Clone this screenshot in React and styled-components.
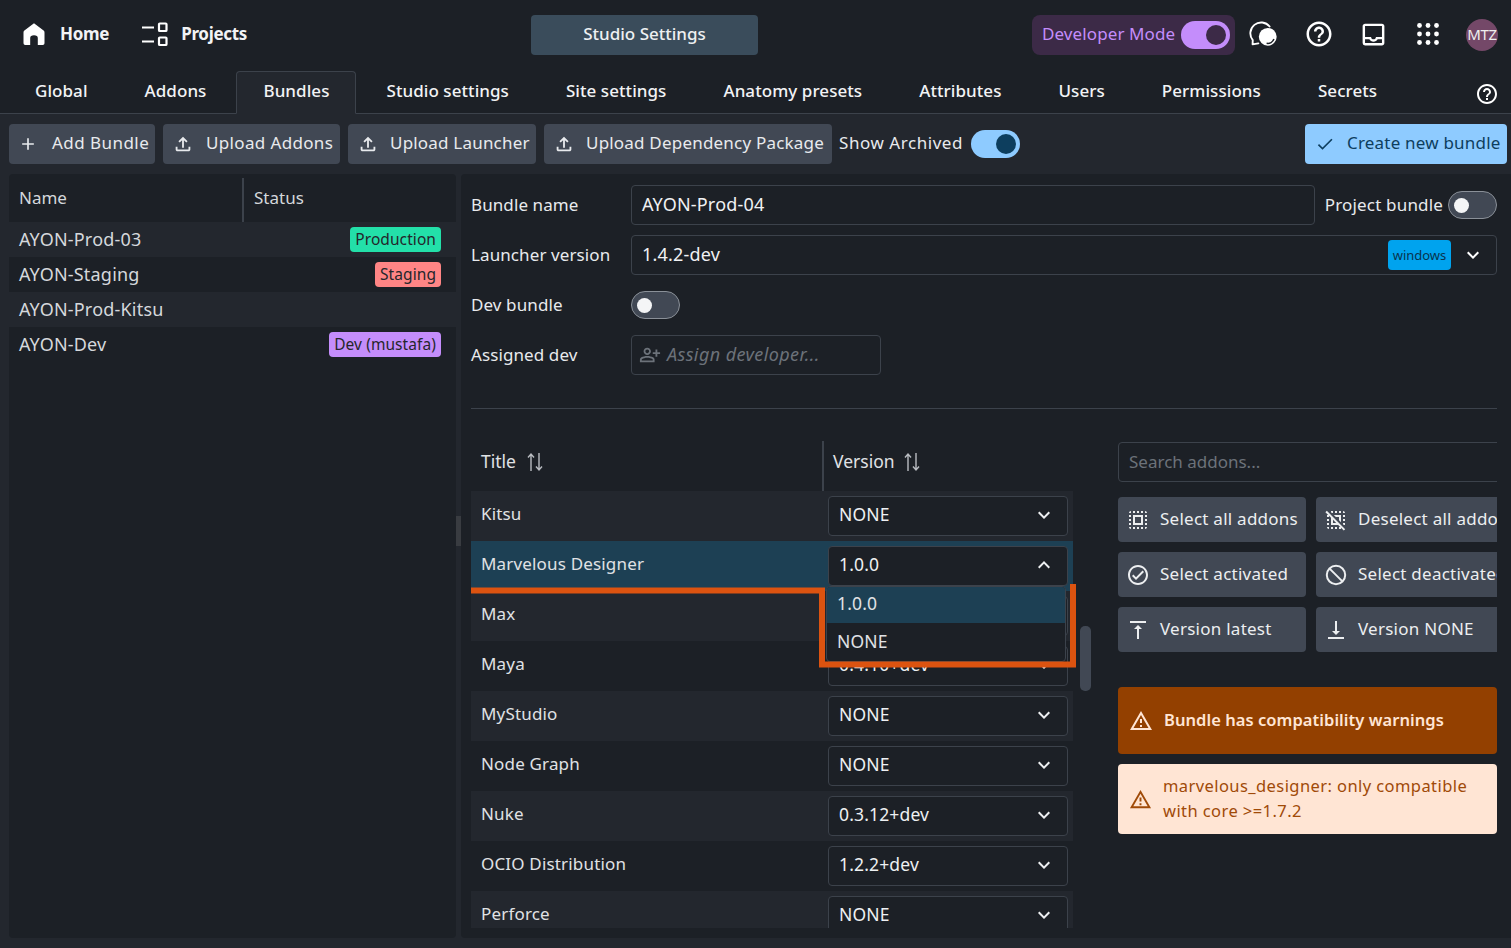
import React from "react";
import styled, { createGlobalStyle } from "styled-components";
import {
  MdAdd, MdOutlineFileUpload, MdCheck, MdOutlineHelpOutline, MdOutlineInbox,
  MdKeyboardArrowDown, MdKeyboardArrowUp, MdOutlinePersonAddAlt, MdOutlineSelectAll, MdOutlineDeselect,
  MdOutlineCheckCircle, MdVerticalAlignTop, MdVerticalAlignBottom, MdOutlineWarningAmber,
} from "react-icons/md";

const Global = createGlobalStyle`
  html, body { margin: 0; padding: 0; background: #23272e; }
  * { box-sizing: border-box; }
  body { font-family: "Noto Sans", "Open Sans", sans-serif; font-size: 17px; color: #e8eaed; }
`;

const T = styled.span`
  margin-bottom: ${p => (p.$mb === undefined ? 4 : p.$mb)}px;
`;
const Page = styled.div`
  width: 1511px; height: 948px; overflow: hidden; display: flex; flex-direction: column;
  background: #23272e;
`;
const TopBar = styled.header`
  height: 67px; flex: none; background: #1c2026; display: flex; align-items: center;
  padding: 0 13px 0 21px; position: relative;
`;
const NavLink = styled.div`
  display: flex; align-items: center; gap: ${p => p.$gap}px; font-weight: 700; font-size: 17px;
  color: #f2f3f5; margin-right: 32px; letter-spacing: -.3px;
`;
const CenterButton = styled.div`
  position: absolute; left: 531px; top: 15px; width: 227px; height: 40px; border-radius: 4px;
  background: #3a4c5b; display: flex; align-items: center; justify-content: center; padding-bottom: 3px;
  font-weight: 500; font-size: 17px; letter-spacing: 0; color: #eef0f2;
`;
const TopRight = styled.div`
  margin-left: auto; display: flex; align-items: center; margin-top: 3px;
`;
const DevMode = styled.div`
  width: 203px; height: 40px; border-radius: 8px; background: #3c2a47; display: flex; align-items: center;
  justify-content: space-between; padding: 0 5px 0 10px; color: #c48dfb; font-size: 17px; letter-spacing: .1px;
  margin-right: 14px;
`;
const Toggle = styled.div`
  width: 49px; height: 28px; border-radius: 14px; flex: none; display: flex; align-items: center;
  justify-content: ${p => (p.$on ? "flex-end" : "flex-start")};
  padding: 0 ${p => (p.$on ? 4 : 5)}px;
  background: ${p => p.$bg}; border: ${p => (p.$on ? "none" : "1px solid #8a9098")};
`;
const Knob = styled.div`
  width: ${p => p.$s}px; height: ${p => p.$s}px; border-radius: 50%; background: ${p => p.$c};
`;
const TopIcon = styled.div`
  width: 30px; height: 30px; display: flex; align-items: center; justify-content: center; color: #fff;
  margin-left: ${p => p.$ml || 0}px; margin-top: -2px;
`;
const Avatar = styled.div`
  width: 32px; height: 32px; border-radius: 50%; background: #744868; color: #eee; font-size: 15px;
  display: flex; align-items: center; justify-content: center; margin-left: 23px; letter-spacing: -.3px;
  white-space: nowrap; overflow: visible; margin-top: -1px;
`;
const TabBar = styled.nav`
  height: 47px; flex: none; background: #1c2026; border-bottom: 1px solid #3c424b; display: flex;
  align-items: flex-end; padding: 0 14px 0 8px; position: relative;
`;
const Tab = styled.div`
  height: 43px; margin-bottom: -1px; padding: 0 26px 5px; display: flex; align-items: center; font-size: 17px;
  letter-spacing: .06px; font-weight: 500; color: #f2f3f5; border-radius: 4px 4px 0 0;
  border: 1px solid ${p => (p.$active ? "#3c424b" : "transparent")};
  border-bottom: 1px solid ${p => (p.$active ? "#23272e" : "transparent")};
  background: ${p => (p.$active ? "#23272e" : "transparent")};
  margin-right: 3px;
`;
const TabHelp = styled.div`
  margin-left: auto; display: flex; color: #fff; margin-bottom: 7px; margin-right: -2px;
`;
const Toolbar = styled.div`
  display: flex; align-items: center; gap: 8px; padding: 10px 4px 10px 9px; flex: none;
`;
const ToolButton = styled.div`
  height: 40px; width: ${p => p.$w}px; flex: none; border-radius: 4px; background: #414854; display: flex; align-items: center;
  padding-left: ${p => p.$pl || 9}px; gap: ${p => p.$gap || 11}px; font-size: 17px; letter-spacing: ${p => p.$ls || 0.2}px; color: #e8eaed; white-space: nowrap;
`;
const ToolLabel = styled.span`
  color: #e8eaed; font-size: 17px; letter-spacing: .55px; margin-left: -1px; margin-bottom: 4px;
`;
const CreateButton = styled(ToolButton)`
  margin-left: auto; background: #8ecbff; color: #0d3e5e; padding-left: 10px; gap: 12px;
`;
const Panels = styled.div`
  flex: 1; min-height: 0; display: flex; padding: 0 0 10px 9px;
`;
const ListPanel = styled.section`
  width: 447px; flex: none; background: #1c2026; border-radius: 4px; overflow: hidden;
`;
const ListHead = styled.div`
  height: 48px; display: grid; grid-template-columns: 233px 1fr; padding-top: 4px;
`;
const ListHeadCell = styled.div`
  padding-left: ${p => p.$pl}px; padding-bottom: 6px; display: flex; align-items: center; color: #d5d8dc;
  border-left: ${p => (p.$sep ? "2px solid #3c424b" : "none")};
`;
const ListRow = styled.div`
  height: 35px; display: flex; align-items: center; justify-content: space-between; padding: 0 15px 0 10px;
  background: ${p => (p.$odd ? "#23272e" : "#1c2026")}; color: #d5d8dc; letter-spacing: .2px; font-size: 18px;
`;
const Badge = styled.div`
  height: 25px; padding: 0 5px; border-radius: 4px; display: flex; align-items: center; background: ${p => p.$bg};
  color: #24262b; font-size: 15.5px; letter-spacing: .08px;
`;
const Splitter = styled.div`
  width: 5px; flex: none; display: flex; align-items: center;
`;
const SplitGrip = styled.div`
  width: 5px; height: 30px; background: #393c41; margin-top: -50px;
`;
const Editor = styled.section`
  flex: 1; min-width: 0; background: #1c2026; border-radius: 4px 0 0 4px; padding: 11px 14px 0 10px;
  display: flex; flex-direction: column; overflow: hidden;
`;
const FormRow = styled.div`
  display: flex; align-items: center; height: 40px; margin-bottom: 10px; color: #e8eaed; letter-spacing: .1px;
`;
const FormLabel = styled.div`
  width: 160px; flex: none; font-size: 17px; padding-bottom: 2px;
`;
const Field = styled.div`
  flex: ${p => (p.$w ? "none" : 1)}; width: ${p => (p.$w ? `${p.$w}px` : "auto")}; height: 40px; border: 1px solid #3c424b;
  border-radius: 4px; display: flex; align-items: center; padding: 0 10px; gap: 6px; font-size: 18px;
  color: #f0f1f3; background: #1c2026; min-width: 0; letter-spacing: .2px;
`;
const MutedField = styled(Field)`
  color: #6c727a; font-style: italic; letter-spacing: .4px; padding-left: 7px; gap: 6px;
`;
const WinBadge = styled.div`
  margin-left: auto; height: 30px; width: 63px; background: #00a3ee; border-radius: 4px; color: #08344e;
  font-size: 13px; display: flex; align-items: center; justify-content: center; letter-spacing: -.05px;
`;
const ChevronSlot = styled.div`
  display: flex; color: #fff; margin: 0 1px 0 4px;
`;
const ProjectLabel = styled.div`
  margin: 0 5px 0 10px; white-space: nowrap; padding-bottom: 2px; letter-spacing: .17px;
`;
const Divider = styled.div`
  height: 1px; background: #3c424b; flex: none; margin-top: 23px; margin-bottom: 32px;
`;
const Lower = styled.div`
  flex: 1; min-height: 0; display: flex; position: relative; margin-bottom: 10px;
`;
const TableWrap = styled.div`
  width: 602px; flex: none; position: relative; height: 487px;
`;
const TableHead = styled.div`
  height: 50px; display: grid; grid-template-columns: 351px 1fr;
`;
const HeadCell = styled.div`
  display: flex; align-items: center; gap: ${p => p.$gap}px; padding-left: ${p => p.$pl}px; padding-bottom: 8px;
  border-left: ${p => (p.$sep ? "2px solid #3c424b" : "none")}; color: #e0e2e5; font-size: 17.5px;
`;
const TableBody = styled.div`
  height: 437px; overflow: hidden;
`;
const Row = styled.div`
  height: 50px; display: grid; grid-template-columns: 347px 240px; align-items: center; padding-left: 10px;
  background: ${p => (p.$sel ? "#1d4054" : p.$odd ? "#23272e" : "#1c2026")}; color: #e0e2e5; letter-spacing: .17px;
`;
const RowTitle = styled.div`
  margin-bottom: 6px;
`;
const Select = styled.div`
  height: 40px; width: 240px; border: 1px solid #3c424b; border-radius: 4px; background: #1c2026;
  display: flex; align-items: center; justify-content: space-between; padding: 0 11px 0 10px; color: #eef0f2;
  font-size: 17.5px; letter-spacing: .15px;
  svg { margin-bottom: 2px; }
`;
const Dropdown = styled.div`
  position: absolute; left: 355px; top: 145px; width: 240px; height: 76px; background: #1c2026;
  border: 1px solid #3c424b; border-radius: 4px; overflow: hidden; z-index: 2; color: #e0e2e5;
  font-size: 17.5px; letter-spacing: .15px;
`;
const DropItem = styled.div`
  height: ${p => p.$h}px; padding: 0 10px; display: flex; align-items: center;
  background: ${p => (p.$sel ? "#1d4054" : "transparent")};
`;
const Annotation = styled.svg`
  position: absolute; left: 0; top: 143px; z-index: 3; overflow: visible; pointer-events: none;
`;
const ScrollThumb = styled.div`
  position: absolute; left: 609px; top: 185px; width: 11px; height: 65px; border-radius: 5px; background: #414854;
`;
const SideColumn = styled.aside`
  margin-left: 45px; flex: 1; min-width: 0; overflow: hidden; display: flex; flex-direction: column; padding-top: 1px;
`;
const Search = styled.div`
  width: 400px; height: 40px; flex: none; border: 1px solid #3c424b; border-radius: 4px; display: flex; align-items: center;
  padding-left: 10px; color: #6c727a; letter-spacing: 0;
`;
const ActionGrid = styled.div`
  display: grid; grid-template-columns: 188px 200px; gap: 10px; margin-top: 15px; flex: none;
`;
const Action = styled.div`
  height: 45px; border-radius: 4px; background: #414854; display: flex; align-items: center; padding-left: 8px; gap: 10px;
  color: #eceef0; white-space: nowrap; letter-spacing: .25px; overflow: hidden; font-size: 17px;
`;
const WarnStrong = styled.div`
  margin-top: 35px; height: 67px; flex: none; border-radius: 4px; background: #934000; color: #ffe5d4; display: flex;
  align-items: center; padding-left: 11px; gap: 11px; font-weight: 600; letter-spacing: .05px; font-size: 16.5px;
`;
const WarnSoft = styled.div`
  margin-top: 10px; height: 70px; flex: none; border-radius: 4px; background: #ffe5d4; color: #a04a08; display: flex;
  align-items: center; padding-left: 11px; gap: 11px; line-height: 25px; letter-spacing: .42px; font-size: 16.5px;
`;

const HomeIcon = () => (
  <svg width="26" height="26" viewBox="0 0 26 26" fill="#fff">
    <path d="M13 2.2 22.6 9.6Q23.5 10.3 23.5 11.5V22.2Q23.5 24 21.8 24H16.8V17Q16.8 14.2 13 14.2T9.2 17V24H4.2Q2.5 24 2.5 22.2V11.5Q2.5 10.3 3.4 9.6Z" />
  </svg>
);
const ProjectsIcon = () => (
  <svg width="28" height="26" viewBox="0 0 28 26" fill="none" stroke="#fff" strokeWidth="2.2">
    <path d="M1 6.5h12M1 20.5h12" />
    <rect x="18" y="2.5" width="7.5" height="7.5" rx="0.8" />
    <rect x="18" y="16.5" width="7.5" height="7.5" rx="0.8" />
  </svg>
);
const ChatIcon = () => (
  <svg width="32" height="28" viewBox="0 0 32 28" fill="none">
    <path d="M22 6A11 11 0 0 0 4 20.5L3.8 25L10 24" stroke="#fff" strokeWidth="2" strokeLinecap="round" strokeLinejoin="round" />
    <circle cx="20" cy="17" r="9.5" fill="#fff" />
    <path d="M18.8 23.9A7 7 0 0 0 26.6 19.4" stroke="#1c2026" strokeWidth="1.6" />
  </svg>
);
const AppsIcon = () => (
  <svg width="30" height="30" viewBox="0 0 30 30" fill="#fff">
    {[6.5, 15, 23.5].map(y => [6.5, 15, 23.5].map(x => <circle key={`${x}-${y}`} cx={x} cy={y} r="2.4" />))}
  </svg>
);
const BlockIcon = () => (
  <svg width="24" height="24" viewBox="0 0 24 24" fill="none" stroke="currentColor" strokeWidth="2" style={{ flex: "none" }}>
    <circle cx="12" cy="12" r="9.2" />
    <path d="M5.6 5.6 18.4 18.4" />
  </svg>
);
const SortIcon = () => (
  <svg width="18" height="20" viewBox="0 0 18 20" fill="none" stroke="#b9bcc1" strokeWidth="1.4">
    <path d="M5 19V2M2 5.5 5 2l3 3.5" />
    <path d="M13 1v17M10 14.5 13 18l3-3.5" />
  </svg>
);

const tabs = ["Global", "Addons", "Bundles", "Studio settings", "Site settings", "Anatomy presets", "Attributes", "Users", "Permissions", "Secrets"];
const bundles = [
  { n: "AYON-Prod-03", b: "Production", c: "#23e0a9" },
  { n: "AYON-Staging", b: "Staging", c: "#ff8585" },
  { n: "AYON-Prod-Kitsu" },
  { n: "AYON-Dev", b: "Dev (mustafa)", c: "#c48dfb" },
];
const addons = [
  ["Kitsu", "NONE"], ["Marvelous Designer", "1.0.0"], ["Max", "NONE"], ["Maya", "0.4.10+dev"], ["MyStudio", "NONE"],
  ["Node Graph", "NONE"], ["Nuke", "0.3.12+dev"], ["OCIO Distribution", "1.2.2+dev"], ["Perforce", "NONE"],
];
const icon = I => () => <I size={24} style={{ flex: "none" }} />;
const actions = [
  [icon(MdOutlineSelectAll), "Select all addons"], [icon(MdOutlineDeselect), "Deselect all addons"],
  [icon(MdOutlineCheckCircle), "Select activated"], [BlockIcon, "Select deactivated"],
  [icon(MdVerticalAlignTop), "Version latest"], [icon(MdVerticalAlignBottom), "Version NONE"],
];

export default function App() {
  return (
    <Page>
      <Global />
      <TopBar>
        <NavLink $gap={13}><HomeIcon />Home</NavLink>
        <NavLink $gap={12}><ProjectsIcon />Projects</NavLink>
        <CenterButton>Studio Settings</CenterButton>
        <TopRight>
          <DevMode><T $mb={4}>Developer Mode</T><Toggle $on $bg="#c48dfb"><Knob $s={20} $c="#3c2a47" /></Toggle></DevMode>
          <TopIcon><ChatIcon /></TopIcon>
          <TopIcon $ml={25}><MdOutlineHelpOutline size={30} /></TopIcon>
          <TopIcon $ml={24}><MdOutlineInbox size={29} /></TopIcon>
          <TopIcon $ml={25}><AppsIcon /></TopIcon>
          <Avatar><T $mb={2}>MTZ</T></Avatar>
        </TopRight>
      </TopBar>
      <TabBar>
        {tabs.map(t => <Tab key={t} $active={t === "Bundles"}>{t}</Tab>)}
        <TabHelp><MdOutlineHelpOutline size={24} /></TabHelp>
      </TabBar>
      <Toolbar>
        <ToolButton $w={146} $gap={14} $ls={0.45}><MdAdd size={20} /><T>Add Bundle</T></ToolButton>
        <ToolButton $w={177} $gap={12} $ls={0.35}><MdOutlineFileUpload size={22} /><T>Upload Addons</T></ToolButton>
        <ToolButton $w={188}><MdOutlineFileUpload size={22} /><T>Upload Launcher</T></ToolButton>
        <ToolButton $w={288}><MdOutlineFileUpload size={22} /><T>Upload Dependency Package</T></ToolButton>
        <ToolLabel>Show Archived</ToolLabel>
        <Toggle $on $bg="#8ecbff"><Knob $s={20} $c="#0d3e5e" /></Toggle>
        <CreateButton $w={202}><MdCheck size={20} /><T>Create new bundle</T></CreateButton>
      </Toolbar>
      <Panels>
        <ListPanel>
          <ListHead>
            <ListHeadCell $pl={10}>Name</ListHeadCell>
            <ListHeadCell $pl={10} $sep>Status</ListHeadCell>
          </ListHead>
          {bundles.map((b, i) => (
            <ListRow key={b.n} $odd={i % 2 === 0}>
              <T $mb={2}>{b.n}</T>
              {b.b && <Badge $bg={b.c}><T $mb={2}>{b.b}</T></Badge>}
            </ListRow>
          ))}
        </ListPanel>
        <Splitter><SplitGrip /></Splitter>
        <Editor>
          <FormRow>
            <FormLabel>Bundle name</FormLabel>
            <Field><T $mb={2}>AYON-Prod-04</T></Field>
            <ProjectLabel>Project bundle</ProjectLabel>
            <Toggle $bg="#414854"><Knob $s={15} $c="#f4f5f6" /></Toggle>
          </FormRow>
          <FormRow>
            <FormLabel>Launcher version</FormLabel>
            <Field><T $mb={2}>1.4.2-dev</T><WinBadge>windows</WinBadge><ChevronSlot><MdKeyboardArrowDown size={24} /></ChevronSlot></Field>
          </FormRow>
          <FormRow>
            <FormLabel>Dev bundle</FormLabel>
            <Toggle $bg="#414854"><Knob $s={15} $c="#f4f5f6" /></Toggle>
          </FormRow>
          <FormRow>
            <FormLabel>Assigned dev</FormLabel>
            <MutedField $w={250}><MdOutlinePersonAddAlt size={22} /><T $mb={2}>Assign developer...</T></MutedField>
          </FormRow>
          <Divider />
          <Lower>
            <TableWrap>
              <TableHead>
                <HeadCell $pl={10} $gap={10}><T $mb={2}>Title</T><SortIcon /></HeadCell>
                <HeadCell $pl={9} $gap={8} $sep><T $mb={2}>Version</T><SortIcon /></HeadCell>
              </TableHead>
              <TableBody>
                {addons.map((a, i) => (
                  <Row key={a[0]} $odd={i % 2 === 0} $sel={i === 1}>
                    <RowTitle>{a[0]}</RowTitle>
                    <Select><T>{a[1]}</T>{i === 1 ? <MdKeyboardArrowUp size={24} /> : <MdKeyboardArrowDown size={24} />}</Select>
                  </Row>
                ))}
              </TableBody>
              <Dropdown>
                <DropItem $sel $h={36}><T $mb={4}>1.0.0</T></DropItem>
                <DropItem $h={38}><T $mb={2}>NONE</T></DropItem>
              </Dropdown>
              <Annotation width="606" height="85" viewBox="0 0 606 85" fill="none">
                <path d="M0 6.5H351V80.5H602V0" stroke="#dc5310" strokeWidth="6" />
              </Annotation>
              <ScrollThumb />
            </TableWrap>
            <SideColumn>
              <Search><T $mb={2}>Search addons...</T></Search>
              <ActionGrid>
                {actions.map(([I, t]) => <Action key={t}><I /><T $mb={2}>{t}</T></Action>)}
              </ActionGrid>
              <WarnStrong><MdOutlineWarningAmber size={24} style={{ flex: "none" }} /><T $mb={2}>Bundle has compatibility warnings</T></WarnStrong>
              <WarnSoft><MdOutlineWarningAmber size={23} style={{ flex: "none" }} /><T $mb={2}>marvelous_designer: only compatible<br />with core &gt;=1.7.2</T></WarnSoft>
            </SideColumn>
          </Lower>
        </Editor>
      </Panels>
    </Page>
  );
}
